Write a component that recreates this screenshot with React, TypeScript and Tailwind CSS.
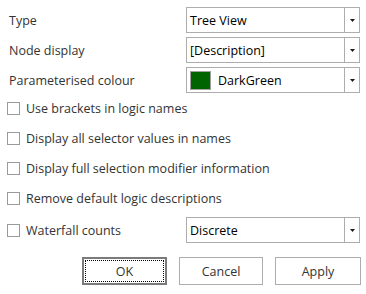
import React from 'react';

type ComboProps = {
  value: string;
  swatch?: string;
};

const Combo: React.FC<ComboProps> = ({ value, swatch }) => (
  <div className="flex h-[26px] w-[174px] border border-[#adadad] bg-white">
    <div className="flex flex-1 items-center pl-[3px]">
      {swatch && (
        <span
          className="mr-[7px] h-[19px] w-[21px] border border-[#a0a0a0]"
          style={{ backgroundColor: swatch }}
        />
      )}
      <span className="text-[#000]">{value}</span>
    </div>
    <div className="flex w-[15px] items-center justify-center border-l border-[#adadad]">
      <svg width="5" height="3" viewBox="0 0 5 3">
        <path d="M0 0h5L2.5 3z" fill="#1a1a1a" />
      </svg>
    </div>
  </div>
);

const Check: React.FC<{ label: string }> = ({ label }) => (
  <label className="flex h-[17px] items-center gap-[6px]">
    <span className="h-[13px] w-[13px] border border-[#9a9a9a] bg-white" />
    <span>{label}</span>
  </label>
);

const App: React.FC = () => {
  return (
    <div className="h-[294px] w-[366px] bg-white pt-[7px] font-['Open_Sans',sans-serif] text-[12.5px] leading-[17px] text-[#333]">
      {/* combos */}
      <div className="flex flex-col gap-[4px] pr-[6px]">
        <div className="flex items-center justify-between">
          <span className="pl-[9px]">Type</span>
          <Combo value="Tree View" />
        </div>
        <div className="flex items-center justify-between">
          <span className="pl-[9px]">Node display</span>
          <Combo value="[Description]" />
        </div>
        <div className="flex items-center justify-between">
          <span className="pl-[9px]">Parameterised colour</span>
          <Combo value="DarkGreen" swatch="#006400" />
        </div>
      </div>

      {/* options */}
      <div className="mt-[7px] flex flex-col gap-[13px] pl-[7px]">
        <Check label="Use brackets in logic names" />
        <Check label="Display all selector values in names" />
        <Check label="Display full selection modifier information" />
        <Check label="Remove default logic descriptions" />
      </div>

      <div className="mt-[10px] flex items-center justify-between pl-[7px] pr-[6px]">
        <Check label="Waterfall counts" />
        <Combo value="Discrete" />
      </div>

      {/* buttons */}
      <div className="mt-[14px] flex justify-end gap-[12px] pr-[5px]">
        <button className="h-[28px] w-[85px] border-2 border-[#7a7a7a] bg-white p-[1px] text-[#333]">
          <span className="flex h-full w-full items-center justify-center border border-dotted border-black">
            OK
          </span>
        </button>
        <button className="h-[28px] w-[84px] border border-[#adadad] bg-white text-[#333]">Cancel</button>
        <button className="h-[28px] w-[86px] border border-[#adadad] bg-white text-[#333]">Apply</button>
      </div>
    </div>
  );
};

export default App;
